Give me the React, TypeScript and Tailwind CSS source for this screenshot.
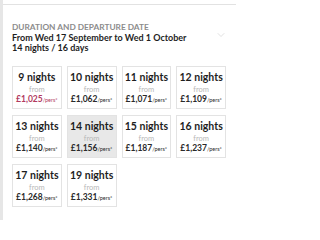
import { ChevronDown } from "lucide-react";

type Option = {
	nights: number;
	price: string;
	cheapest?: boolean;
	selected?: boolean;
};

const options: Option[] = [
	{ nights: 9, price: "£1,025", cheapest: true },
	{ nights: 10, price: "£1,062" },
	{ nights: 11, price: "£1,071" },
	{ nights: 12, price: "£1,109" },
	{ nights: 13, price: "£1,140" },
	{ nights: 14, price: "£1,156", selected: true },
	{ nights: 15, price: "£1,187" },
	{ nights: 16, price: "£1,237" },
	{ nights: 17, price: "£1,268" },
	{ nights: 19, price: "£1,331" },
];

function NightCard({ option }: { option: Option }) {
	return (
		<div
			className={`flex h-[43px] flex-col items-center border border-[#e3e3e3] pt-[3px] ${
				option.selected ? "bg-[#e8e8e8]" : "bg-white"
			}`}
		>
			<div className="text-[10.5px] font-bold leading-[14px] text-[#1e1e1e]">
				{option.nights} nights
			</div>
			<div className="mt-[1px] text-[7.5px] leading-[9px] text-[#b8b8b8]">
				from
			</div>
			<div
				className={`text-[8.5px] font-bold leading-[10px] ${
					option.cheapest ? "text-[#b23a5e]" : "text-[#2a2a2a]"
				}`}
			>
				{option.price}
				<span className="text-[5.5px] font-normal">/pers*</span>
			</div>
		</div>
	);
}

export default function App() {
	return (
		<div
			className="h-[220px] w-[236px] overflow-hidden border-l-[3px] border-[#e6e6e6] bg-white pt-[4px]"
			style={{ fontFamily: "Lato, 'Open Sans', sans-serif" }}
		>
			<div className="border-t border-[#e2e2e2] pl-[9px] pr-[10px] pt-[17px]">
				<div className="flex items-start justify-between">
					<div>
						<div className="text-[8.3px] font-bold uppercase leading-[10px] text-[#8c8c8c]">
							Duration and departure date
						</div>
						<div className="mt-[1px] text-[9px] font-bold leading-[10px] text-[#1e1e1e]">
							From Wed 17 September to Wed 1 October
						</div>
						<div className="text-[9px] font-bold leading-[10px] text-[#1e1e1e]">
							14 nights / 16 days
						</div>
					</div>
					<ChevronDown
						size={12}
						strokeWidth={1}
						className="mr-[-1px] mt-[7px] text-[#c2c2c2]"
					/>
				</div>

				<div className="mt-[13px] grid grid-cols-4 gap-x-[5px] gap-y-[6px]">
					{options.map((option) => (
						<NightCard key={option.nights} option={option} />
					))}
				</div>
			</div>
		</div>
	);
}
